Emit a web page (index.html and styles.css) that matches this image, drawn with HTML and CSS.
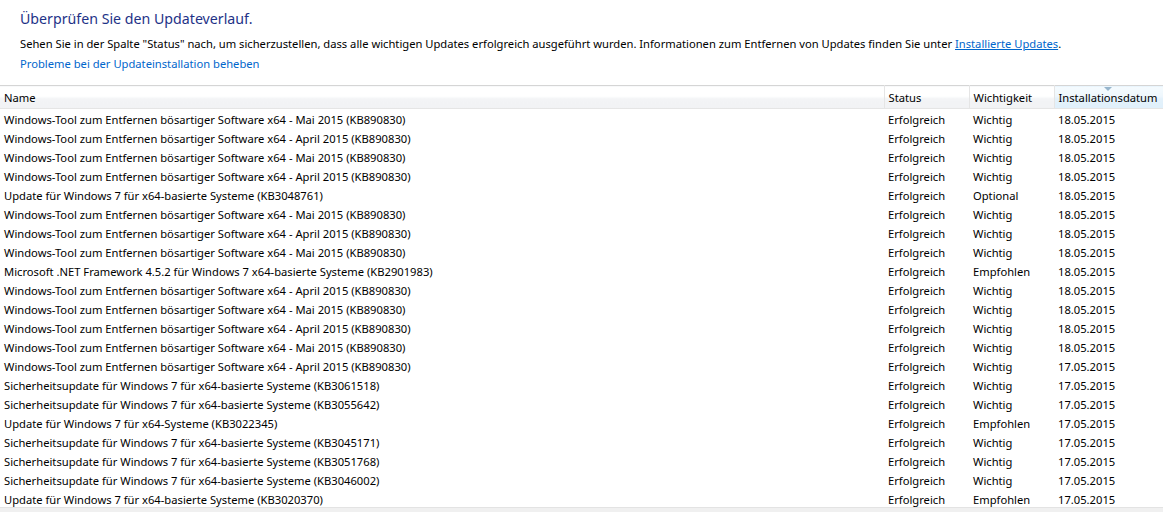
FILE: index.html
```html
<!DOCTYPE html>
<html>
    <head>
        <meta charset="utf-8">
        <title>Updateverlauf anzeigen</title>
        <link rel="stylesheet" href="styles.css">
    </head>
    <body>
        <div id="intro">
            <h1 id="title">Überprüfen Sie den Updateverlauf.</h1>
            <p class="desc first">Sehen Sie in der Spalte "Status" nach, um sicherzustellen, dass alle wichtigen Updates erfolgreich ausgeführt wurden. Informationen zum Entfernen von Updates finden Sie unter <a href="#" class="inline">Installierte Updates</a>.</p>
            <p class="desc"><a href="#" class="task">Probleme bei der Updateinstallation beheben</a></p>
        </div>
        <div id="list">
            <table class="updates">
                <colgroup>
                    <col class="c-name">
                    <col class="c-status">
                    <col class="c-prio">
                    <col class="c-date">
                </colgroup>
                <thead>
                    <tr>
                        <th>Name</th>
                        <th>Status</th>
                        <th>Wichtigkeit</th>
                        <th class="sorted">Installationsdatum<span class="arrow"></span></th>
                    </tr>
                </thead>
                <tbody>
                    <tr><td>Windows-Tool zum Entfernen bösartiger Software x64 - Mai 2015 (KB890830)</td><td>Erfolgreich</td><td>Wichtig</td><td>18.05.2015</td></tr>
                    <tr><td>Windows-Tool zum Entfernen bösartiger Software x64 - April 2015 (KB890830)</td><td>Erfolgreich</td><td>Wichtig</td><td>18.05.2015</td></tr>
                    <tr><td>Windows-Tool zum Entfernen bösartiger Software x64 - Mai 2015 (KB890830)</td><td>Erfolgreich</td><td>Wichtig</td><td>18.05.2015</td></tr>
                    <tr><td>Windows-Tool zum Entfernen bösartiger Software x64 - April 2015 (KB890830)</td><td>Erfolgreich</td><td>Wichtig</td><td>18.05.2015</td></tr>
                    <tr><td>Update für Windows 7 für x64-basierte Systeme (KB3048761)</td><td>Erfolgreich</td><td>Optional</td><td>18.05.2015</td></tr>
                    <tr><td>Windows-Tool zum Entfernen bösartiger Software x64 - Mai 2015 (KB890830)</td><td>Erfolgreich</td><td>Wichtig</td><td>18.05.2015</td></tr>
                    <tr><td>Windows-Tool zum Entfernen bösartiger Software x64 - April 2015 (KB890830)</td><td>Erfolgreich</td><td>Wichtig</td><td>18.05.2015</td></tr>
                    <tr><td>Windows-Tool zum Entfernen bösartiger Software x64 - Mai 2015 (KB890830)</td><td>Erfolgreich</td><td>Wichtig</td><td>18.05.2015</td></tr>
                    <tr><td>Microsoft .NET Framework 4.5.2 für Windows 7 x64-basierte Systeme (KB2901983)</td><td>Erfolgreich</td><td>Empfohlen</td><td>18.05.2015</td></tr>
                    <tr><td>Windows-Tool zum Entfernen bösartiger Software x64 - April 2015 (KB890830)</td><td>Erfolgreich</td><td>Wichtig</td><td>18.05.2015</td></tr>
                    <tr><td>Windows-Tool zum Entfernen bösartiger Software x64 - Mai 2015 (KB890830)</td><td>Erfolgreich</td><td>Wichtig</td><td>18.05.2015</td></tr>
                    <tr><td>Windows-Tool zum Entfernen bösartiger Software x64 - April 2015 (KB890830)</td><td>Erfolgreich</td><td>Wichtig</td><td>18.05.2015</td></tr>
                    <tr><td>Windows-Tool zum Entfernen bösartiger Software x64 - Mai 2015 (KB890830)</td><td>Erfolgreich</td><td>Wichtig</td><td>18.05.2015</td></tr>
                    <tr><td>Windows-Tool zum Entfernen bösartiger Software x64 - April 2015 (KB890830)</td><td>Erfolgreich</td><td>Wichtig</td><td>17.05.2015</td></tr>
                    <tr><td>Sicherheitsupdate für Windows 7 für x64-basierte Systeme (KB3061518)</td><td>Erfolgreich</td><td>Wichtig</td><td>17.05.2015</td></tr>
                    <tr><td>Sicherheitsupdate für Windows 7 für x64-basierte Systeme (KB3055642)</td><td>Erfolgreich</td><td>Wichtig</td><td>17.05.2015</td></tr>
                    <tr><td>Update für Windows 7 für x64-Systeme (KB3022345)</td><td>Erfolgreich</td><td>Empfohlen</td><td>17.05.2015</td></tr>
                    <tr><td>Sicherheitsupdate für Windows 7 für x64-basierte Systeme (KB3045171)</td><td>Erfolgreich</td><td>Wichtig</td><td>17.05.2015</td></tr>
                    <tr><td>Sicherheitsupdate für Windows 7 für x64-basierte Systeme (KB3051768)</td><td>Erfolgreich</td><td>Wichtig</td><td>17.05.2015</td></tr>
                    <tr><td>Sicherheitsupdate für Windows 7 für x64-basierte Systeme (KB3046002)</td><td>Erfolgreich</td><td>Wichtig</td><td>17.05.2015</td></tr>
                    <tr><td>Update für Windows 7 für x64-basierte Systeme (KB3020370)</td><td>Erfolgreich</td><td>Empfohlen</td><td>17.05.2015</td></tr>
                </tbody>
            </table>
        </div>
        <div id="scrollbar"></div>
    </body>
</html>
```

FILE: styles.css
```css
body {
    margin: 0px;
    background: #ffffff;
    font-family: "Noto Sans", Arial, sans-serif;
    font-size: 11.2px;
    color: #000000;
    overflow: hidden;
}
#intro {
    padding: 8px 20px 0px 20px;
    height: 85px;
    box-sizing: border-box;
}
#title {
    margin: 0px;
    font-size: 14.2px;
    font-weight: normal;
    line-height: 22px;
    color: #1e3287;
}
.desc {
    margin: 0px;
    line-height: 20px;
}
.desc.first {
    margin-top: 4px;
}
a.inline {
    color: #0066cc;
    text-decoration: underline;
}
a.task {
    color: #0066cc;
    text-decoration: none;
}
#list {
    height: 422px;
    overflow: hidden;
}
.updates {
    width: 100%;
    table-layout: fixed;
    border-collapse: collapse;
    border-top: 1px solid #d5d5d5;
}
.c-name {
    width: 884px;
}
.c-status {
    width: 85px;
}
.c-prio {
    width: 85px;
}
.updates th {
    position: relative;
    height: 22px;
    padding: 0px 0px 0px 4px;
    text-align: left;
    font-weight: normal;
    background: linear-gradient(to bottom, #ffffff, #ffffff 45%, #f3f4f6 55%, #f1f2f4);
    border-right: 1px solid #e5e5e5;
    border-bottom: 1px solid #e5e5e5;
    white-space: nowrap;
}
.updates th.sorted {
    background: linear-gradient(to bottom, #f5fbfe, #eef7fd 45%, #e3f1fb 55%, #e0f0fb);
    border-left: 1px solid #bde4f8;
    border-right: none;
}
.arrow {
    position: absolute;
    top: 1px;
    left: 49px;
    width: 0px;
    height: 0px;
    border-left: 4px solid transparent;
    border-right: 4px solid transparent;
    border-top: 4px solid #97b5cc;
}
.updates td {
    height: 19px;
    padding: 0px 0px 0px 4px;
    white-space: nowrap;
    overflow: hidden;
}
.updates tbody tr:first-child td {
    padding-top: 1px;
}
#scrollbar {
    height: 13px;
    background: #f0f0f0;
    border-top: 1px solid #e3e3e3;
}
```
